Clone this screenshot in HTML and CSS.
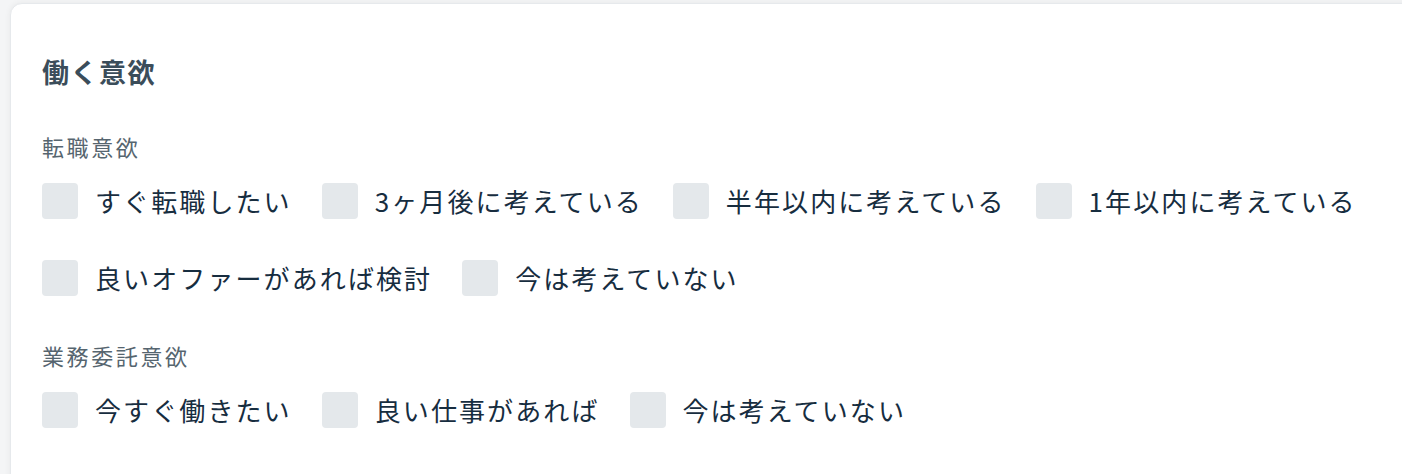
FILE: index.html
```html
<!DOCTYPE html>
<html lang="ja">
<head>
<meta charset="utf-8">
<title>働く意欲</title>
<link rel="stylesheet" href="styles.css">
</head>
<body>
<div class="page">
  <section class="card">
    <h2 class="card-title">働く意欲</h2>
    <div class="group">
      <div class="group-label">転職意欲</div>
      <div class="options">
        <label class="option"><span class="box"></span><span class="text">すぐ転職したい</span></label>
        <label class="option"><span class="box"></span><span class="text">3ヶ月後に考えている</span></label>
        <label class="option"><span class="box"></span><span class="text">半年以内に考えている</span></label>
        <label class="option"><span class="box"></span><span class="text">1年以内に考えている</span></label>
        <label class="option"><span class="box"></span><span class="text">良いオファーがあれば検討</span></label>
        <label class="option"><span class="box"></span><span class="text">今は考えていない</span></label>
      </div>
    </div>
    <div class="group">
      <div class="group-label">業務委託意欲</div>
      <div class="options">
        <label class="option"><span class="box"></span><span class="text">今すぐ働きたい</span></label>
        <label class="option"><span class="box"></span><span class="text">良い仕事があれば</span></label>
        <label class="option"><span class="box"></span><span class="text">今は考えていない</span></label>
      </div>
    </div>
  </section>
</div>
</body>
</html>
```

FILE: styles.css
```css
html, body {
  margin: 0;
  padding: 0;
}
body {
  background: #f4f5f6;
  overflow: hidden;
  font-family: "Noto Sans CJK JP", "Noto Sans", sans-serif;
}
.page {
  padding: 3px 0 0 10px;
}
.card {
  background: #ffffff;
  border: 1px solid #e6e9ec;
  border-radius: 12px;
  box-shadow: 0 0 6px rgba(0, 0, 0, 0.06);
  padding: 50px 32px 60px 31px;
  margin-right: -30px;
}
.card-title {
  margin: 0 0 41px 0;
  font-size: 27px;
  line-height: 36px;
  font-weight: 700;
  letter-spacing: 1.5px;
  color: #3b4d5a;
}
.group + .group {
  margin-top: 44px;
}
.group-label {
  font-size: 22px;
  line-height: 30px;
  letter-spacing: 2.6px;
  color: #56656f;
  margin-bottom: 22px;
}
.options {
  display: flex;
  flex-wrap: wrap;
  row-gap: 41px;
  column-gap: 30px;
}
.option {
  display: flex;
  align-items: center;
  height: 36px;
}
.box {
  width: 36px;
  height: 36px;
  border-radius: 4px;
  background: #e4e8eb;
  flex: none;
}
.text {
  margin-left: 17px;
  font-size: 26px;
  line-height: 36px;
  letter-spacing: 2.1px;
  color: #172d3f;
}
```
